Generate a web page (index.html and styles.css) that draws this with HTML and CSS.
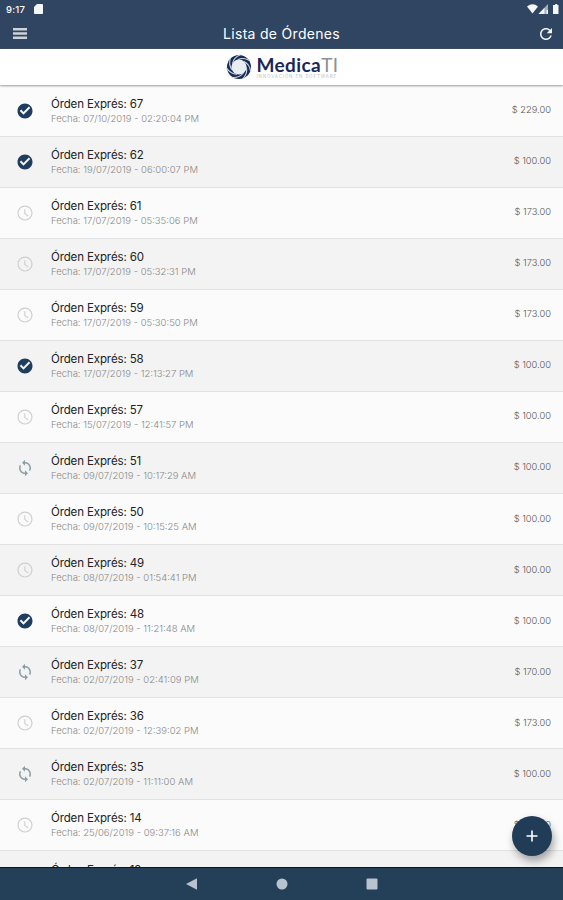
FILE: index.html
```html
<!DOCTYPE html>
<html lang="es">
  <head>
    <meta charset="utf-8">
    <title>Lista de Órdenes</title>
    <link rel="stylesheet" href="styles.css">
  </head>
  <body>
    <!-- Icons used by the list -->
    <svg class="defs">
      <symbol id="done" viewBox="0 0 24 24"><path d="M12 2C6.480 2 2 6.480 2 12s4.480 10 10 10 10-4.480 10-10S17.520 2 12 2zm-2 15l-5-5 1.900-1.900L10 13.200l7.100-7.100L19 8l-9 9z"/></symbol>
      <symbol id="wait" viewBox="0 0 24 24"><path d="M12 2C6.500 2 2 6.500 2 12s4.500 10 10 10 10-4.500 10-10S17.500 2 12 2zm0 18.500c-4.700 0-8.500-3.800-8.500-8.500S7.300 3.500 12 3.500s8.500 3.800 8.500 8.500-3.800 8.500-8.500 8.500zM12.500 7H11v6l4.800 3.500.8-1.200-4.100-3z"/></symbol>
      <symbol id="sync" viewBox="0 0 24 24"><path d="M12 4V1L8 5l4 4V6c3.310 0 6 2.690 6 6 0 1.010-.250 1.970-.700 2.800l1.460 1.460C19.540 15.030 20 13.570 20 12c0-4.420-3.580-8-8-8zm0 14c-3.310 0-6-2.690-6-6 0-1.010.250-1.970.700-2.800L5.240 7.740C4.460 8.970 4 10.430 4 12c0 4.420 3.580 8 8 8v3l4-4-4-4v3z"/></symbol>
    </svg>

    <div class="screen">
      <header class="top">
        <div class="status">
          <span class="clock">9:17</span>
          <svg class="sd" viewBox="0 0 9 10"><path d="M3 0h5.200q.8 0 .8.800v8.400q0 .8-.8.800H.8Q0 10 0 9.200V3z"/></svg>
          <svg class="signals" viewBox="0 0 32 10">
            <path d="M0 2.500Q5.500-1.800 11 2.500L5.500 9.500z"/>
            <path d="M21 0v10H11.500z" opacity=".6"/>
            <path d="M17.500 3.800V10h-6zM19.500 6H21v4h-1.500z"/>
            <path d="M27 1h1.200V0h2v1h1.300v9H26V1z"/>
          </svg>
        </div>
        <div class="toolbar">
          <svg class="menu" viewBox="0 0 14 11"><path d="M0 0h14v2.500H0zM0 4.200h14v2.500H0zM0 8.400h14v2.500H0z"/></svg>
          <h1>Lista de Órdenes</h1>
          <svg class="reload" viewBox="4 4 16 16"><path d="M17.650 6.350C16.200 4.900 14.210 4 12 4c-4.420 0-7.990 3.580-7.990 8s3.570 8 7.990 8c3.730 0 6.840-2.550 7.730-6h-2.080c-.820 2.330-3.040 4-5.650 4-3.310 0-6-2.690-6-6s2.690-6 6-6c1.660 0 3.140.690 4.220 1.780L13 11h7V4l-2.350 2.350z"/></svg>
        </div>
      </header>

      <div class="brand">
        <svg class="logo" viewBox="-13 -13 26 26">
          <circle r="12" fill="#1b2b55"/>
          <circle r="7.600" fill="#e9eef2"/>
          <g fill="none" stroke="#c9d8e4" stroke-width="1.100">
            <path id="slit" d="M-6.500-3.500Q-5.500-9.500 2-12.500"/>
            <use href="#slit" transform="rotate(51.400)"/>
            <use href="#slit" transform="rotate(102.800)"/>
            <use href="#slit" transform="rotate(154.300)"/>
            <use href="#slit" transform="rotate(205.700)"/>
            <use href="#slit" transform="rotate(257.100)"/>
            <use href="#slit" transform="rotate(308.500)"/>
          </g>
        </svg>
        <div class="wordmark">
          <div class="name">Medica<span>TI</span></div>
          <div class="tagline">INNOVACIÓN EN SOFTWARE</div>
        </div>
      </div>

      <ul class="orders">
        <li><svg class="done"><use href="#done"/></svg><div class="info"><h2>Órden Exprés: 67</h2><p>Fecha: 07/10/2019 - 02:20:04 PM</p></div><b>$ 229.00</b></li>
        <li><svg class="done"><use href="#done"/></svg><div class="info"><h2>Órden Exprés: 62</h2><p>Fecha: 19/07/2019 - 06:00:07 PM</p></div><b>$ 100.00</b></li>
        <li><svg class="wait"><use href="#wait"/></svg><div class="info"><h2>Órden Exprés: 61</h2><p>Fecha: 17/07/2019 - 05:35:06 PM</p></div><b>$ 173.00</b></li>
        <li><svg class="wait"><use href="#wait"/></svg><div class="info"><h2>Órden Exprés: 60</h2><p>Fecha: 17/07/2019 - 05:32:31 PM</p></div><b>$ 173.00</b></li>
        <li><svg class="wait"><use href="#wait"/></svg><div class="info"><h2>Órden Exprés: 59</h2><p>Fecha: 17/07/2019 - 05:30:50 PM</p></div><b>$ 173.00</b></li>
        <li><svg class="done"><use href="#done"/></svg><div class="info"><h2>Órden Exprés: 58</h2><p>Fecha: 17/07/2019 - 12:13:27 PM</p></div><b>$ 100.00</b></li>
        <li><svg class="wait"><use href="#wait"/></svg><div class="info"><h2>Órden Exprés: 57</h2><p>Fecha: 15/07/2019 - 12:41:57 PM</p></div><b>$ 100.00</b></li>
        <li><svg class="sync"><use href="#sync"/></svg><div class="info"><h2>Órden Exprés: 51</h2><p>Fecha: 09/07/2019 - 10:17:29 AM</p></div><b>$ 100.00</b></li>
        <li><svg class="wait"><use href="#wait"/></svg><div class="info"><h2>Órden Exprés: 50</h2><p>Fecha: 09/07/2019 - 10:15:25 AM</p></div><b>$ 100.00</b></li>
        <li><svg class="wait"><use href="#wait"/></svg><div class="info"><h2>Órden Exprés: 49</h2><p>Fecha: 08/07/2019 - 01:54:41 PM</p></div><b>$ 100.00</b></li>
        <li><svg class="done"><use href="#done"/></svg><div class="info"><h2>Órden Exprés: 48</h2><p>Fecha: 08/07/2019 - 11:21:48 AM</p></div><b>$ 100.00</b></li>
        <li><svg class="sync"><use href="#sync"/></svg><div class="info"><h2>Órden Exprés: 37</h2><p>Fecha: 02/07/2019 - 02:41:09 PM</p></div><b>$ 170.00</b></li>
        <li><svg class="wait"><use href="#wait"/></svg><div class="info"><h2>Órden Exprés: 36</h2><p>Fecha: 02/07/2019 - 12:39:02 PM</p></div><b>$ 173.00</b></li>
        <li><svg class="sync"><use href="#sync"/></svg><div class="info"><h2>Órden Exprés: 35</h2><p>Fecha: 02/07/2019 - 11:11:00 AM</p></div><b>$ 100.00</b></li>
        <li><svg class="wait"><use href="#wait"/></svg><div class="info"><h2>Órden Exprés: 14</h2><p>Fecha: 25/06/2019 - 09:37:16 AM</p></div><b>$ 100.00</b></li>
        <li><div class="info last"><h2>Órden Exprés: 12</h2></div></li>
      </ul>

      <button class="add" aria-label="Agregar"><svg viewBox="0 0 12 12"><path d="M5.200 0.500h1.600v4.700h4.700v1.600H6.800v4.700H5.200V6.800H.5V5.200h4.700z"/></svg></button>

      <footer class="navbar">
        <svg viewBox="0 0 12 12"><path d="M0 6L11 .3v11.400z"/></svg>
        <svg viewBox="0 0 12 12"><circle cx="6" cy="6" r="5.500"/></svg>
        <svg viewBox="0 0 12 12"><rect x=".5" y=".5" width="11" height="11" rx="1"/></svg>
      </footer>
    </div>
  </body>
</html>
```
FILE: styles.css
```css
* {
  box-sizing: border-box;
}

body {
  margin: 0;
  font-family: Inter, "Open Sans", sans-serif;
}

h1, h2, p, ul {
  margin: 0;
  padding: 0;
}

svg {
  display: block;
  flex: none;
}

.defs {
  position: absolute;
  width: 0;
  height: 0;
}

.screen {
  position: relative;
  display: flex;
  flex-direction: column;
  width: 563px;
  height: 900px;
  overflow: hidden;
  background: #fbfbfb;
}

/* Status bar + title */
.top {
  flex: none;
  height: 49px;
  background: #304561;
  color: #fff;
  fill: #f4f6f8;
}

.status {
  display: flex;
  align-items: center;
  height: 18px;
  padding: 0 4px 0 6px;
}

.clock {
  width: 28px;
  font-size: 9.5px;
  font-weight: 500;
  letter-spacing: 0.2px;
}

.sd {
  width: 9px;
  height: 10px;
}

.signals {
  width: 32px;
  height: 10px;
  margin-left: auto;
}

.toolbar {
  display: flex;
  align-items: center;
  justify-content: space-between;
  height: 31px;
  padding: 0 11px 0 13px;
}

.menu {
  width: 14px;
  height: 11px;
  fill: #ccd2da;
}

.toolbar h1 {
  margin-right: 4px;
  font-size: 14px;
  font-weight: 400;
  line-height: 31px;
  letter-spacing: 0.3px;
}

.reload {
  width: 12px;
  height: 12px;
}

/* Logo strip */
.brand {
  position: relative;
  z-index: 1;
  display: flex;
  flex: none;
  justify-content: center;
  gap: 5px;
  height: 36px;
  padding-top: 5px;
  background: #fff;
  box-shadow: 0 1px 2px #999;
}

.logo {
  width: 26px;
  height: 26px;
}

.wordmark {
  width: 81px;
}

.name {
  font-family: Lato, sans-serif;
  font-size: 19px;
  line-height: 21px;
  font-weight: 700;
  letter-spacing: 0.4px;
  color: #1b2658;
}

.name span {
  font-weight: 400;
  color: #8d8f96;
}

.tagline {
  font-size: 4.5px;
  line-height: 4px;
  letter-spacing: 0.85px;
  white-space: nowrap;
  color: #c2c4c8;
}

/* Orders */
.orders {
  flex: 1;
  min-height: 0;
  overflow: hidden;
  padding-top: 0.5px;
  list-style: none;
}

.orders li {
  display: flex;
  align-items: center;
  height: 51.07px;
  padding: 0 12px 0 16px;
  border-bottom: 1px solid #e2e2e2;
  background: #fbfbfb;
}

.orders li:nth-child(even) {
  background: #f3f3f3;
}

.orders li > svg {
  width: 18px;
  height: 18px;
}

.done {
  fill: #1f3d5f;
}

.wait {
  fill: #cfcfcf;
}

.sync {
  fill: #8b9fa5;
}

.info {
  flex: 1;
  margin-left: 17px;
}

.info h2 {
  font-size: 11.5px;
  line-height: 16px;
  font-weight: 400;
  letter-spacing: -0.12px;
  color: #222;
}

.info p {
  font-size: 9.5px;
  line-height: 14px;
  font-weight: 300;
  color: #888;
}

.last {
  margin: 0 0 12px 35px;
}

.orders b {
  font-size: 9.3px;
  line-height: 12px;
  padding-bottom: 1px;
  font-weight: 300;
  color: #555;
}

.add {
  position: absolute;
  right: 11px;
  top: 816px;
  display: flex;
  align-items: center;
  justify-content: center;
  width: 40px;
  height: 40px;
  border: 0;
  border-radius: 50%;
  background: #213c56;
  box-shadow: 2px 5px 8px rgba(0, 0, 0, 0.35);
}

.add svg {
  width: 12px;
  height: 12px;
  fill: #fff;
}

/* Android buttons */
.navbar {
  position: relative;
  display: flex;
  flex: none;
  align-items: center;
  justify-content: center;
  gap: 78px;
  height: 33px;
  border-top: 1px solid #0b1238;
  background: #243f58;
}

.navbar svg {
  width: 12px;
  height: 12px;
  fill: #b9c2cf;
}
```
